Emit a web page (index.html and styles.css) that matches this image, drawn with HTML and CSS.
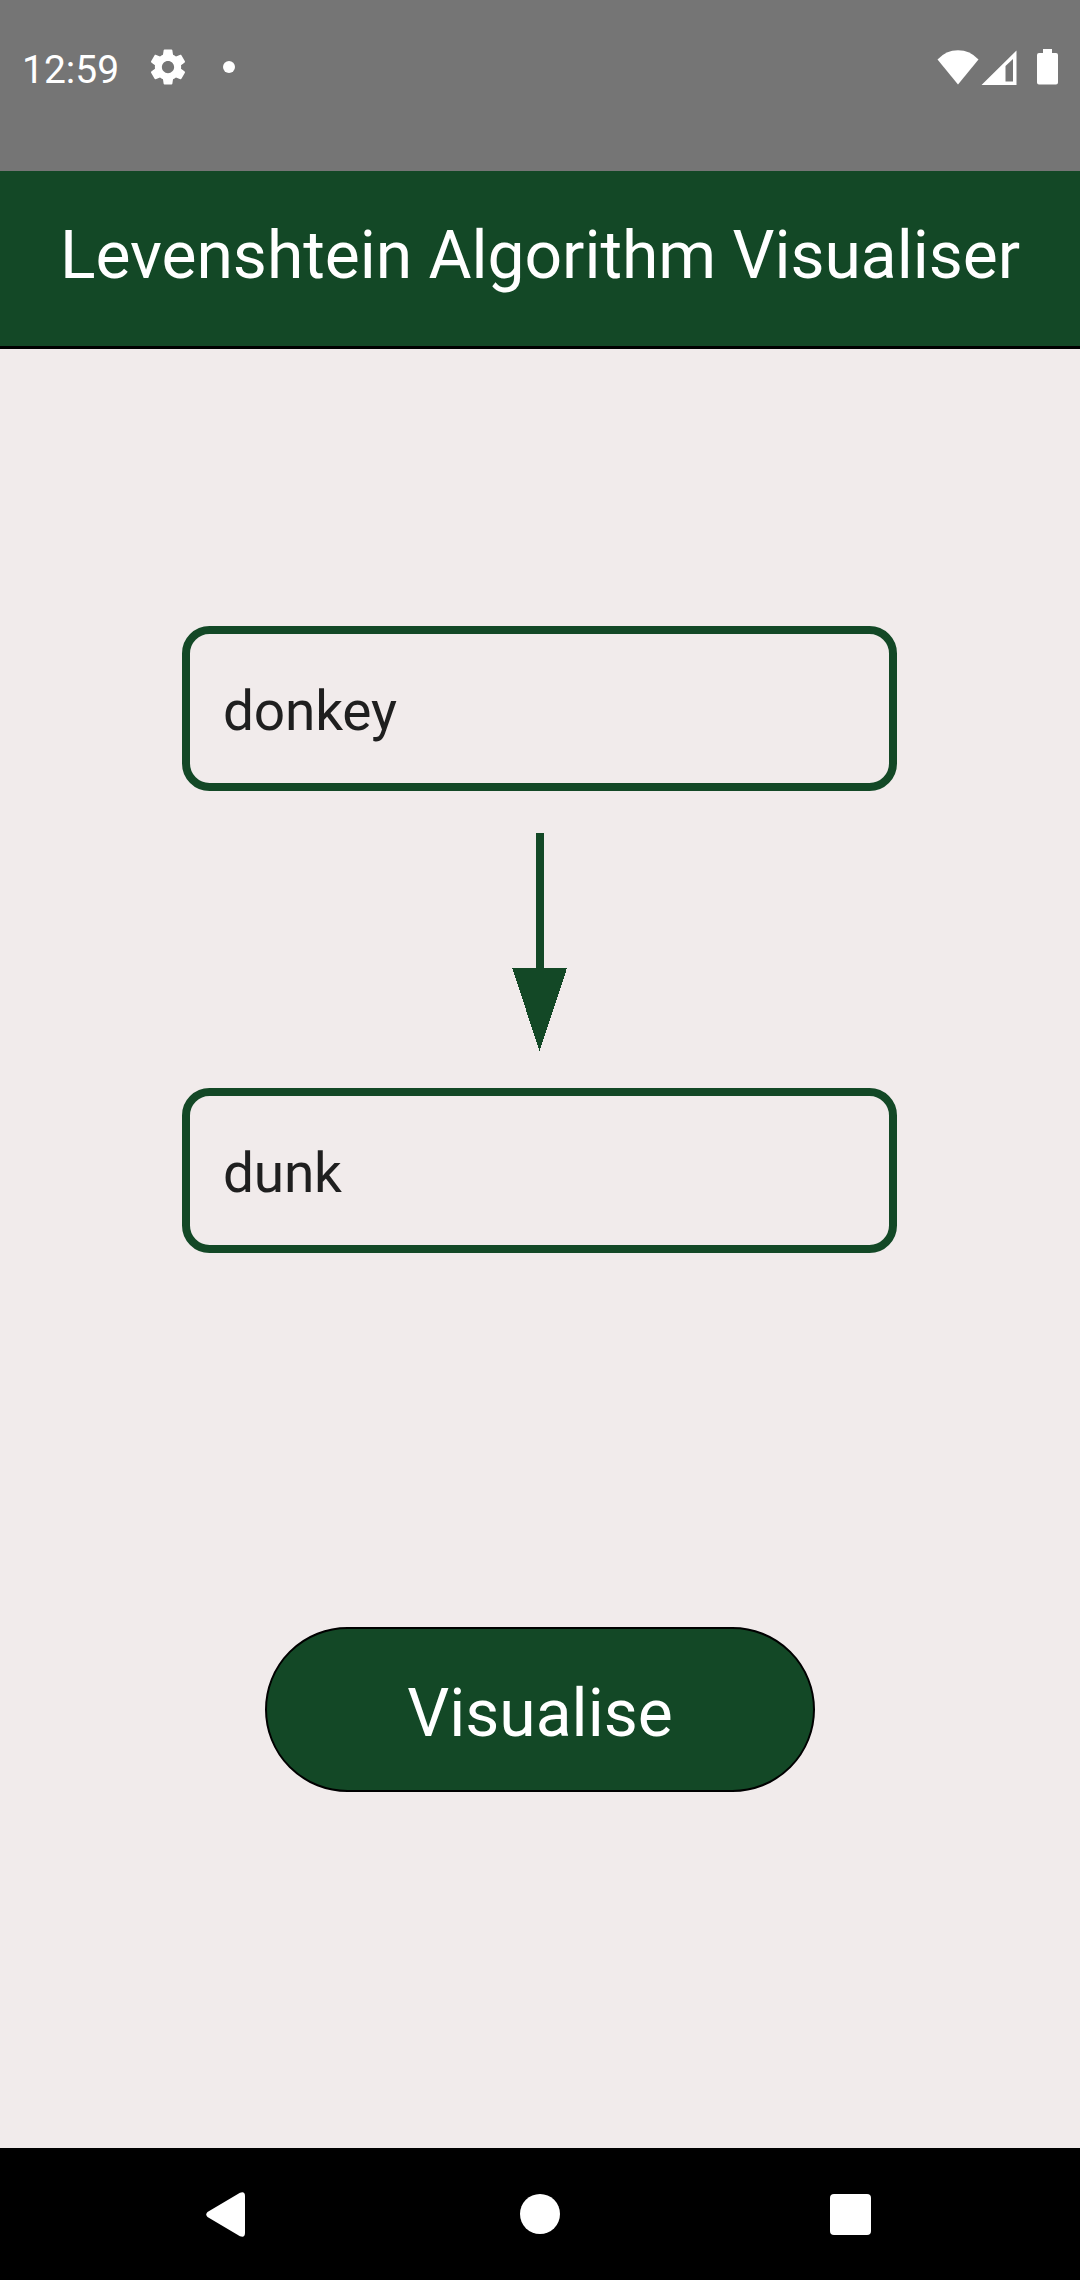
FILE: index.html
```html
<!DOCTYPE html>
<html lang="en">
<head>
<meta charset="utf-8">
<title>Levenshtein Algorithm Visualiser</title>
<link rel="stylesheet" href="styles.css">
</head>
<body>
<div class="screen">
  <div class="status-bar">
    <span class="clock">12:59</span>
    <svg class="gear" width="42" height="42" viewBox="0 0 24 24"><path d="M19.43 12.98c.04-.32.07-.64.07-.98s-.03-.66-.07-.98l2.11-1.65c.19-.15.24-.42.12-.64l-2-3.46c-.12-.22-.39-.3-.61-.22l-2.49 1c-.52-.4-1.08-.73-1.69-.98l-.38-2.65C14.46 2.18 14.25 2 14 2h-4c-.25 0-.46.18-.49.42l-.38 2.65c-.61.25-1.17.59-1.69.98l-2.49-1c-.23-.09-.49 0-.61.22l-2 3.46c-.13.22-.07.49.12.64l2.11 1.65c-.04.32-.07.65-.07.98s.03.66.07.98l-2.11 1.65c-.19.15-.24.42-.12.64l2 3.46c.12.22.39.3.61.22l2.49-1c.52.4 1.08.73 1.69.98l.38 2.65c.03.24.24.42.49.42h4c.25 0 .46-.18.49-.42l.38-2.65c.61-.25 1.17-.59 1.69-.98l2.49 1c.23.09.49 0 .61-.22l2-3.46c.12-.22.07-.49-.12-.64l-2.11-1.65zM12 15.5c-1.93 0-3.5-1.57-3.5-3.5s1.57-3.5 3.5-3.5 3.5 1.57 3.5 3.5-1.57 3.5-3.5 3.5z"/></svg>
    <span class="dot"></span>
    <svg class="wifi" width="42" height="36" viewBox="0 0 42 36"><path d="M.5 9.500Q9 .3 21 .3T41.500 9.500L21 34.500Z"/></svg>
    <svg class="signal" width="36" height="36" viewBox="0 0 36 36"><path fill-rule="evenodd" d="M.5 35L35.500.5V35ZM24.500 16V31.500H32V9Z"/></svg>
    <svg class="battery" width="21" height="36" viewBox="0 0 21 36"><path d="M6 0H15V4H19Q21 4 21 6V33.500Q21 35.500 19 35.500H2Q0 35.500 0 33.500V6Q0 4 2 4H6Z"/></svg>
  </div>
  <header class="app-bar"><h1 class="title">Levenshtein Algorithm Visualiser</h1></header>
  <main class="content">
    <input class="word" type="text" value="donkey" aria-label="Source word">
    <svg class="arrow" width="56" height="219" viewBox="0 0 56 219"><path d="M24 0H32V135H55L27.500 218L.200 135H24Z"/></svg>
    <input class="word" type="text" value="dunk" aria-label="Target word">
    <button class="visualise" type="button">Visualise</button>
  </main>
  <nav class="nav-bar">
    <svg class="back" width="39" height="45" viewBox="0 0 39 45"><path d="M1.500 20L34 .8Q39-1 39 4V41Q39 46 34 44.200L1.500 25Q-1 22.500 1.500 20Z"/></svg>
    <span class="home"></span>
    <span class="recents"></span>
  </nav>
</div>
</body>
</html>
```
FILE: styles.css
```css
* { box-sizing: border-box; }

body {
  margin: 0;
  font-family: Roboto, sans-serif;
}

.screen {
  display: flex;
  flex-direction: column;
  width: 1080px;
  height: 2280px;
  overflow: hidden;
  background: #f1ebeb;
}

.status-bar {
  display: flex;
  align-items: flex-start;
  height: 171px;
  padding: 46px 22px 0 22px;
  background: #757575;
  color: #fff;
  fill: #fff;
}

.clock {
  width: 125px;
  padding-top: 1px;
  font-size: 39px;
  line-height: 46px;
}

.dot {
  width: 12px;
  height: 12px;
  margin: 15px 0 0 34px;
  border-radius: 50%;
  background: #fff;
}

.wifi { margin: 4px 0 0 auto; }
.signal { margin: 4px 20px 0 2px; }
.battery { margin-top: 3px; }

.app-bar {
  height: 178px;
  padding-top: 46px;
  border-bottom: 3px solid #000;
  background: #134826;
}

.title {
  margin: 0;
  color: #fff;
  font-size: 66px;
  font-weight: 400;
  letter-spacing: -0.04px;
  line-height: 78px;
  text-align: center;
  white-space: nowrap;
}

.content {
  display: flex;
  flex: 1;
  flex-direction: column;
  align-items: center;
  padding-top: 277px;
}

.word {
  width: 715px;
  height: 165px;
  margin-right: 1px;
  padding: 5px 33px 0;
  border: 8px solid #134826;
  border-radius: 27.5px;
  outline: none;
  background: transparent;
  color: #1f1f1f;
  font: 400 55px Roboto, sans-serif;
  letter-spacing: -0.2px;
}

.arrow {
  margin: 42px 0 36px;
  fill: #134826;
  shape-rendering: crispEdges;
}

.visualise {
  width: 550px;
  height: 165px;
  margin-top: 374px;
  padding: 7px 0 0;
  border: 2px solid #000;
  border-radius: 83px;
  background: #134826;
  color: #fff;
  font: 400 66px Roboto, sans-serif;
}

.nav-bar {
  display: flex;
  align-items: flex-start;
  height: 132px;
  padding: 46px 0 0 206px;
  background: #000;
  fill: #fff;
}

.back { margin-top: -2px; }

.home {
  width: 40px;
  height: 40px;
  margin-left: 275px;
  border-radius: 50%;
  background: #fff;
}

.recents {
  width: 41px;
  height: 41px;
  margin-left: 270px;
  border-radius: 4px;
  background: #fff;
}
```
